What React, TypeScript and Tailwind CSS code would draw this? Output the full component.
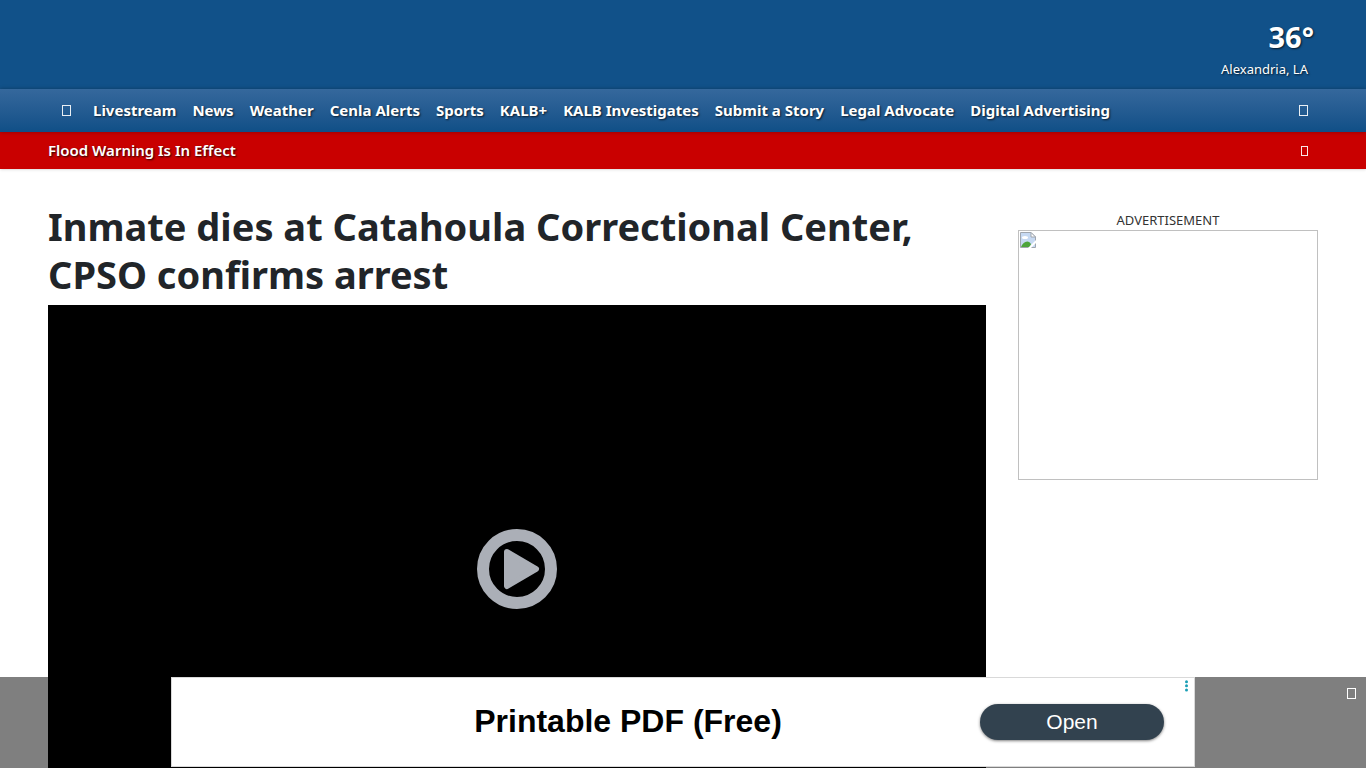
import React from "react";

const navLinks = [
  "Livestream",
  "News",
  "Weather",
  "Cenla Alerts",
  "Sports",
  "KALB+",
  "KALB Investigates",
  "Submit a Story",
  "Legal Advocate",
  "Digital Advertising",
];

const Header = () => {
  return (
    <header className="relative z-10 text-white">
      <div className="flex h-[89px] flex-col items-end bg-[#115189] px-12 pt-[19px] [text-shadow:1px_1px_2px_rgba(0,0,0,0.7)]">
        <div className="pr-1 text-[29px] leading-9 font-bold">36°</div>
        <div className="pr-[10px] text-[13px] leading-7">Alexandria, LA</div>
      </div>
      <nav className="flex h-[43px] items-center bg-linear-to-b from-[#35689c] to-[#0f4f87] px-12 shadow-[0_0_4px_rgba(0,0,0,0.3)]">
        <a href="#home" aria-label="Home" className="mr-[22px] ml-[14px] h-[11px] w-[9px] border border-white/90" />
        <ul className="flex flex-1 gap-4 text-[15px] font-bold whitespace-nowrap [text-shadow:1px_1px_2px_rgba(0,0,0,0.7)]">
          {navLinks.map((link) => (
            <li key={link}>
              <a href="#section">{link}</a>
            </li>
          ))}
        </ul>
        <button aria-label="Search" className="mr-[10px] h-[11px] w-[9px] border border-white/90" />
      </nav>
    </header>
  );
};

const AlertBar = () => {
  return (
    <div className="flex h-[37px] items-center justify-between bg-[#c90000] px-12 text-white shadow-sm">
      <a href="#alerts" className="text-[15px] font-semibold [text-shadow:1px_1px_2px_rgba(0,0,0,0.8)]">
        Flood Warning Is In Effect
      </a>
      <button aria-label="Close alert" className="mr-[10px] h-[10px] w-[7px] border border-white/90" />
    </div>
  );
};

const Video = () => {
  return (
    <div className="flex aspect-video items-center justify-center bg-black">
      <button aria-label="Play video">
        <svg width="80" height="80" viewBox="0 0 80 80">
          <circle cx="40" cy="40" r="34" fill="none" stroke="#abafb7" strokeWidth="12" />
          <path d="M30 23 L59 40 L30 57 Z" fill="#abafb7" stroke="#abafb7" strokeWidth="6" strokeLinejoin="round" />
        </svg>
      </button>
    </div>
  );
};

const SideAd = () => {
  return (
    <aside className="w-[300px] shrink-0 pt-2">
      <p className="text-center text-[13px] leading-5 text-[#333]">ADVERTISEMENT</p>
      <div className="h-[250px] border border-[#c0c0c0] p-px">
        <svg width="16" height="16" viewBox="0 0 16 16">
          <path d="M0.5 0.5 H11 L15.5 5 V15.5 H0.5 Z" fill="#c6d9f2" stroke="#a0a6ae" />
          <path d="M11 0.5 V5 H15.5 Z" fill="#fff" stroke="#a0a6ae" />
          <ellipse cx="5" cy="5.5" rx="3" ry="1.5" fill="#fff" />
          <path d="M1 15 C3 10 8 7 11 12 L10 15 Z" fill="#4da43b" />
          <path d="M8 16 L16 8 V11 L11 16 Z" fill="#fff" />
        </svg>
      </div>
    </aside>
  );
};

const BottomBanner = () => {
  return (
    <div className="fixed inset-x-0 bottom-0 z-20 flex h-[91px] justify-center bg-black/50">
      <div className="relative grid h-[90px] w-full max-w-[1024px] grid-cols-[1fr_184px] items-center border border-[#d9d9d9] bg-white pr-[30px] pl-[104px] font-['Liberation_Sans',sans-serif]">
        <p className="pb-[2px] text-center text-[32px] leading-10 font-bold text-black">Printable PDF (Free)</p>
        <button className="h-9 rounded-full bg-[#32424f] text-[21px] text-white shadow-[0_1px_3px_rgba(0,0,0,0.5)]">
          Open
        </button>
        <button aria-label="Ad options" className="absolute top-[2px] right-[6px]">
          <svg width="3" height="12" viewBox="0 0 3 12" fill="#1a9fb5">
            <circle cx="1.5" cy="1.7" r="1.5" />
            <circle cx="1.5" cy="5.8" r="1.5" />
            <circle cx="1.5" cy="9.9" r="1.5" />
          </svg>
        </button>
      </div>
      <button aria-label="Close banner" className="absolute top-[11px] right-[10px] h-[11px] w-[9px] border border-white" />
    </div>
  );
};

const App = () => {
  return (
    <div className="min-h-screen bg-white font-['Noto_Sans',sans-serif]">
      <Header />
      <AlertBar />
      <main className="flex gap-8 px-12 pt-[33px]">
        <article className="min-w-0 flex-1">
          <h1 className="pb-[7px] text-[38px] leading-[48px] font-bold text-[#212529]">
            Inmate dies at Catahoula Correctional Center, CPSO confirms arrest
          </h1>
          <Video />
        </article>
        <SideAd />
      </main>
      <BottomBanner />
    </div>
  );
};

export default App;
